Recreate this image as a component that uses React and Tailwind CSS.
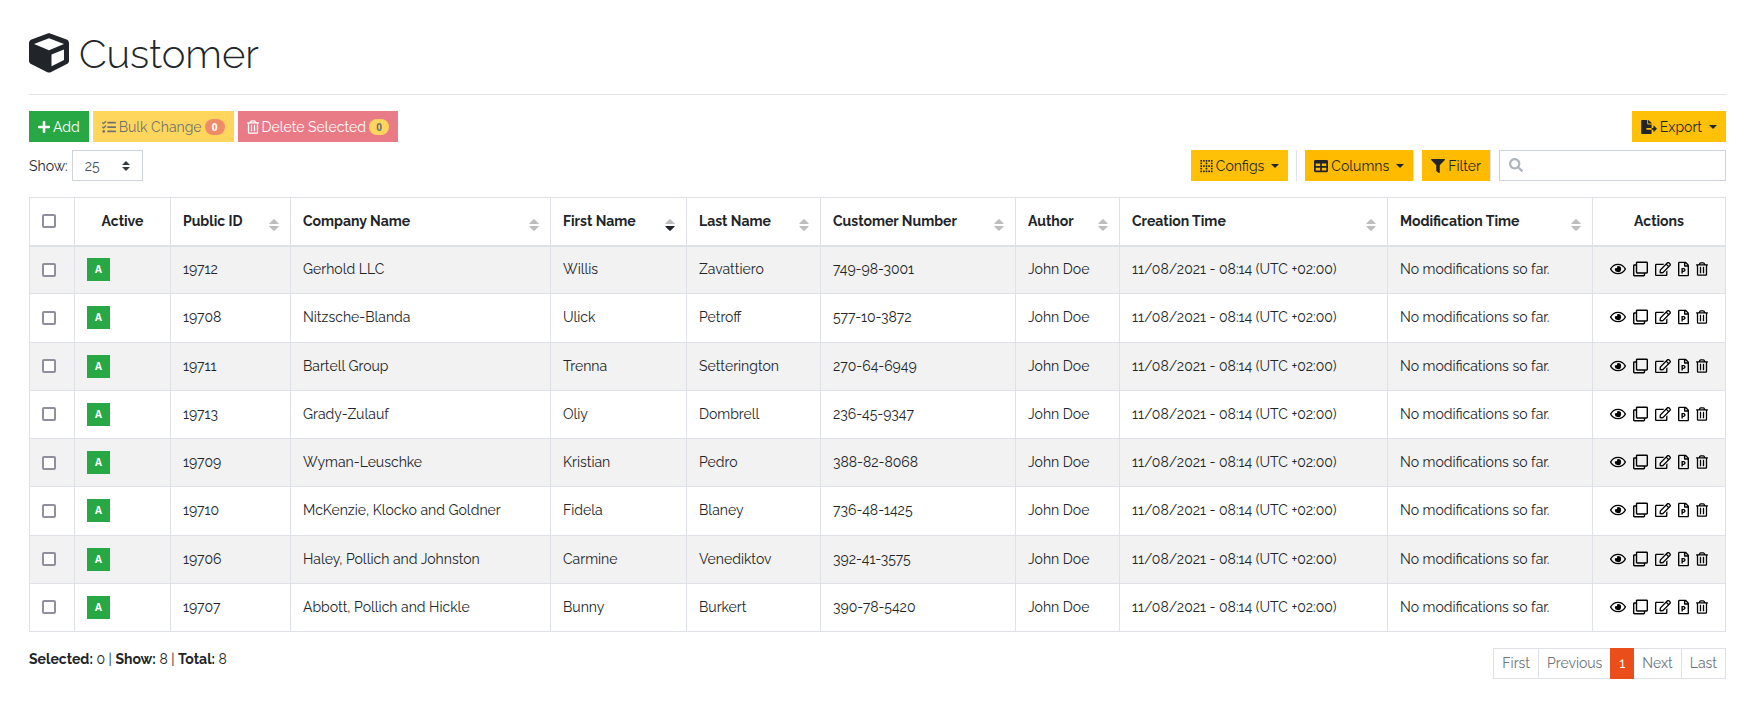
import { FaCube, FaPlus, FaTasks, FaRegTrashAlt, FaFileExport, FaTable, FaFilter, FaSearch, FaRegEye, FaRegClone, FaRegEdit, FaRegFilePowerpoint, FaBorderNone } from "react-icons/fa";

const columns = [
  { label: "Public ID", width: "w-[120px]" },
  { label: "Company Name", width: "w-[260px]" },
  { label: "First Name", width: "w-[136px]", sorted: true },
  { label: "Last Name", width: "w-[134px]" },
  { label: "Customer Number", width: "w-[195px]" },
  { label: "Author", width: "w-[104px]" },
  { label: "Creation Time", width: "w-[268px]" },
  { label: "Modification Time", width: "w-[205px]" },
];

const customers = [
  ["19712", "Gerhold LLC", "Willis", "Zavattiero", "749-98-3001"],
  ["19708", "Nitzsche-Blanda", "Ulick", "Petroff", "577-10-3872"],
  ["19711", "Bartell Group", "Trenna", "Setterington", "270-64-6949"],
  ["19713", "Grady-Zulauf", "Oliy", "Dombrell", "236-45-9347"],
  ["19709", "Wyman-Leuschke", "Kristian", "Pedro", "388-82-8068"],
  ["19710", "McKenzie, Klocko and Goldner", "Fidela", "Blaney", "736-48-1425"],
  ["19706", "Haley, Pollich and Johnston", "Carmine", "Venediktov", "392-41-3575"],
  ["19707", "Abbott, Pollich and Hickle", "Bunny", "Burkert", "390-78-5420"],
];

const actions = [
  { label: "View", Icon: FaRegEye, width: "w-4" },
  { label: "Copy", Icon: FaRegClone, width: "w-[15px]" },
  { label: "Edit", Icon: FaRegEdit, width: "w-4" },
  { label: "Show document", Icon: FaRegFilePowerpoint, width: "w-[11px]" },
  { label: "Delete", Icon: FaRegTrashAlt, width: "w-3" },
];

function SortArrows({ sorted }) {
  return (
    <svg viewBox="0 0 10 12" className="mt-1 -mb-1 h-3 w-[10px]" aria-hidden="true">
      <path d="M1 5 Q0 5 .5 4.2 L4.3 .4 Q5 -.2 5.7 .4 L9.5 4.2 Q10 5 9 5Z" fill="#bdbdbf" />
      <path d="M1 7 Q0 7 .5 7.8 L4.3 11.6 Q5 12.2 5.7 11.6 L9.5 7.8 Q10 7 9 7Z" fill={sorted ? "#212529" : "#bdbdbf"} />
    </svg>
  );
}

function Caret() {
  return <span className="ml-1 border-x-4 border-t-4 border-x-transparent border-t-[#212529]" />;
}

function ToolButton({ Icon, iconWidth, label, caret, className }) {
  return (
    <button type="button" className={`flex h-[31px] items-center gap-[3px] px-[9px] pt-px text-[#212529] ${className}`}>
      <Icon className={`h-[14px] ${iconWidth}`} />
      <span>{label}</span>
      {caret && <Caret />}
    </button>
  );
}

function Count({ className }) {
  return (
    <span className={`flex h-4 w-5 items-center justify-center rounded-full font-['Open_Sans',sans-serif] text-[10px] font-bold ${className}`}>
      0
    </span>
  );
}

function Tick({ label }) {
  return (
    <input
      type="checkbox"
      aria-label={label}
      className="block h-[14px] w-[14px] appearance-none rounded-xs border-2 border-[#8f8f9d] bg-white"
    />
  );
}

export default function App() {
  return (
    <main className="bg-white pt-[30px] pr-6 pb-9 pl-[29px] font-['Raleway',Lato,sans-serif] text-[14px] leading-[21px] text-[#212529]">
      <h1 className="flex items-center gap-[10px] border-b border-[#e5e5e5] pb-4 text-[40px] leading-[48px] font-light">
        <FaCube className="mb-0.5 h-10 w-10" />
        Customer
      </h1>

      <div className="mt-4 flex items-center justify-between">
        <div className="flex gap-1">
          <button type="button" className="flex h-[31px] items-center gap-[3px] bg-[#28a745] px-[9px] pt-px text-white">
            <FaPlus className="h-[14px] w-3" /> Add
          </button>
          <button type="button" disabled className="flex h-[31px] items-center gap-[3px] bg-[#ffc107] px-[9px] pt-px opacity-65">
            <FaTasks className="h-[14px] w-[14px]" /> Bulk Change
            <Count className="bg-[#e94e1b] text-white" />
          </button>
          <button type="button" disabled className="flex h-[31px] items-center gap-[3px] bg-[#dc3545] px-[9px] pt-px text-white opacity-65">
            <FaRegTrashAlt className="h-[14px] w-3" /> Delete Selected
            <Count className="bg-[#ffc107] text-[#212529]" />
          </button>
        </div>
        <ToolButton Icon={FaFileExport} iconWidth="w-4" label="Export" caret className="bg-[#ffc107]" />
      </div>

      <div className="mt-2 flex items-center justify-between">
        <label className="flex items-center gap-1 pt-px">
          Show:
          <span className="relative -mt-px">
            <select defaultValue="25" className="block h-[31px] w-[71px] appearance-none border border-[#ced4da] bg-white pt-px pl-3 text-[#495057]">
              <option>10</option>
              <option>25</option>
              <option>50</option>
            </select>
            <svg viewBox="0 0 8 10" className="pointer-events-none absolute top-[11px] right-[13px] h-[10px] w-2" aria-hidden="true">
              <path d="M0 4 L4 0 L8 4Z M0 6 L4 10 L8 6Z" fill="#343a40" />
            </svg>
          </span>
        </label>
        <div className="flex items-center">
          <ToolButton Icon={FaBorderNone} iconWidth="w-[13px]" label="Configs" caret className="bg-[#ffc107]" />
          <span className="mx-2 h-[31px] w-px bg-[#dee2e6]" />
          <ToolButton Icon={FaTable} iconWidth="w-[14px]" label="Columns" caret className="border-r border-[#dee2e6] bg-[#ffbb00]" />
          <ToolButton Icon={FaFilter} iconWidth="w-[14px]" label="Filter" className="ml-2 border-r border-[#dee2e6] bg-[#ffbb00]" />
          <label className="relative ml-2">
            <FaSearch className="absolute top-2 left-[10px] h-[14px] w-[14px] text-[#adb5bd]" />
            <input type="search" aria-label="Search" className="block h-[31px] w-[227px] border border-[#ced4da] pr-2 pl-8" />
          </label>
        </div>
      </div>

      <table className="mt-4 h-[435px] w-full table-fixed border-collapse">
        <thead>
          <tr className="h-12 border border-b-2 border-[#dee2e6]">
            <th className="w-[45px] border-x border-[#dee2e6] px-3">
              <Tick label="Select all" />
            </th>
            <th className="w-[96px] border-x border-[#dee2e6] font-bold">Active</th>
            {columns.map(({ label, width, sorted }) => (
              <th key={label} className={`border-x border-[#dee2e6] pr-[11px] pl-3 text-left font-bold ${width}`}>
                <span className="flex items-center justify-between">
                  {label}
                  <SortArrows sorted={sorted} />
                </span>
              </th>
            ))}
            <th className="w-[133px] border-x border-[#dee2e6] font-bold">Actions</th>
          </tr>
        </thead>
        <tbody>
          {customers.map((customer) => (
            <tr key={customer[0]} className="h-12 border border-[#dee2e6] odd:bg-[#f2f2f2]">
              <td className="border-x border-[#dee2e6] px-3">
                <Tick label={`Select ${customer[1]}`} />
              </td>
              <td className="border-x border-[#dee2e6] px-3">
                <span className="flex h-[23px] w-[23px] items-center justify-center bg-[#28a745] font-['Open_Sans',sans-serif] text-[10px] font-bold text-white">A</span>
              </td>
              {[...customer, "John Doe", "11/08/2021 - 08:14 (UTC +02:00)", "No modifications so far."].map((text, i) => (
                <td key={i} className="border-x border-[#dee2e6] px-3 whitespace-nowrap">{text}</td>
              ))}
              <td className="border-x border-[#dee2e6]">
                <div className="flex items-center justify-center gap-[7px] pb-px text-black">
                  {actions.map(({ label, Icon, width }) => (
                    <button key={label} type="button" aria-label={label}>
                      <Icon className={`h-4 ${width}`} />
                    </button>
                  ))}
                </div>
              </td>
            </tr>
          ))}
        </tbody>
      </table>

      <div className="mt-4 flex items-start justify-between">
        <p className="pt-px">
          <b>Selected:</b> 0 | <b>Show:</b> 8 | <b>Total:</b> 8
        </p>
        <nav aria-label="Pages" className="flex h-[31px] border border-[#dee2e6] text-[#6c757d]">
          <a href="#first" className="border-r border-[#dee2e6] px-2 py-1">First</a>
          <a href="#previous" className="px-2 py-1">Previous</a>
          <a href="#page-1" aria-current="page" className="-my-px bg-[#e94e1b] px-[9px] py-[5px] text-white">1</a>
          <a href="#next" className="border-r border-[#dee2e6] px-2 py-1">Next</a>
          <a href="#last" className="px-2 py-1">Last</a>
        </nav>
      </div>
    </main>
  );
}
